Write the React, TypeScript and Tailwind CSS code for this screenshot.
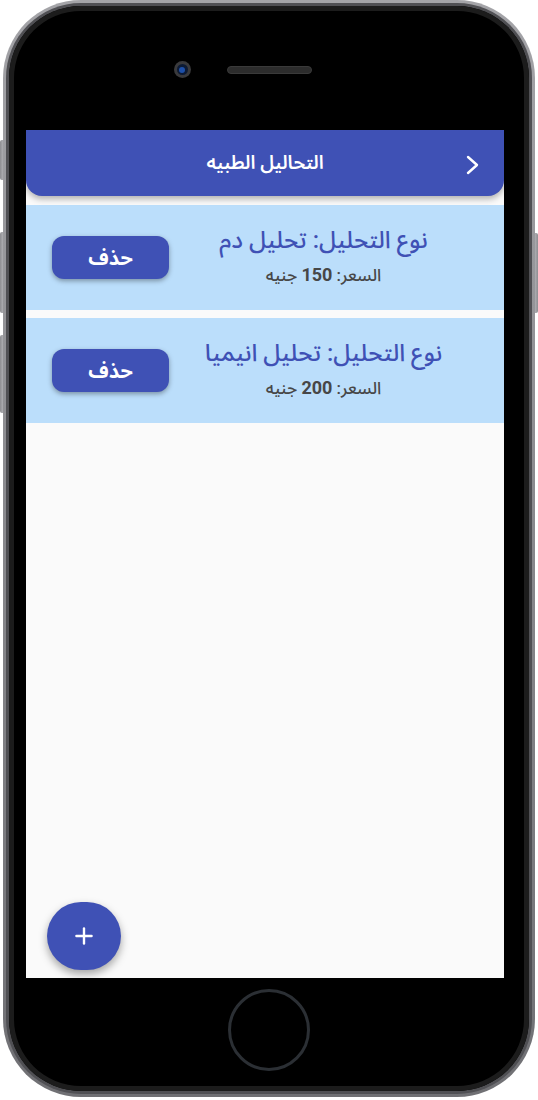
import { Plus } from "lucide-react";

const tests = [
  { name: "تحليل دم", price: 150 },
  { name: "تحليل انيميا", price: 200 },
];

const TestCard = ({ name, price }: { name: string; price: number }) => {
  return (
    <div className="flex h-[105px] items-center bg-[#bbdefb] px-[26px]">
      <div className="flex flex-1 flex-col items-center">
        <p className="text-[24px] leading-[23px] font-medium text-[#3f51b5]">نوع التحليل: {name}</p>
        <p className="mt-[12px] text-[17px] leading-[22px] font-medium text-[#474747]">
          السعر: <span className="text-[18px] font-bold">{price}</span> جنيه
        </p>
      </div>
      <button className="h-[43px] w-[117px] rounded-[12px] bg-[#3f51b5] text-[20px] font-bold text-white shadow-[0_2px_5px_rgba(0,0,0,0.35)]">
        حذف
      </button>
    </div>
  );
};

const Screen = () => {
  return (
    <div
      dir="rtl"
      className="relative ml-[17px] flex h-[848px] w-[478px] flex-col bg-[#fafafa] font-['Roboto','Noto_Sans_Arabic','DejaVu_Sans',sans-serif]"
    >
      <header className="relative z-10 flex h-[66px] shrink-0 items-center justify-center rounded-b-[16px] bg-[#3f51b5] shadow-[0_3px_6px_rgba(0,0,0,0.3)]">
        <svg className="absolute right-[23px] top-[25px]" width="16" height="20" viewBox="0 0 16 20" fill="none">
          <polyline points="3,2 12,10 3,18" stroke="white" strokeWidth="2.4" strokeLinecap="round" strokeLinejoin="round" />
        </svg>
        <h1 className="text-[19px] font-semibold text-white">التحاليل الطبيه</h1>
      </header>
      <div className="mt-[9px] flex flex-col gap-[8px]">
        {tests.map((t) => (
          <TestCard key={t.name} name={t.name} price={t.price} />
        ))}
      </div>
      <button className="absolute bottom-[8px] left-[21px] flex h-[68px] w-[74px] items-center justify-center rounded-full bg-[#3f51b5] text-white shadow-[0_4px_8px_rgba(0,0,0,0.35)]">
        <Plus size={26} strokeWidth={2.2} />
      </button>
    </div>
  );
};

export default function App() {
  return (
    <div className="relative h-[1100px] w-[538px] overflow-hidden bg-white">
      {/* side buttons */}
      <div className="absolute left-0 top-[140px] h-[40px] w-[5px] rounded-l-[2px] bg-gradient-to-r from-[#8d8d91] to-[#c4c4c8]" />
      <div className="absolute left-0 top-[232px] h-[81px] w-[5px] rounded-l-[2px] bg-gradient-to-r from-[#8d8d91] to-[#c4c4c8]" />
      <div className="absolute left-0 top-[335px] h-[78px] w-[5px] rounded-l-[2px] bg-gradient-to-r from-[#8d8d91] to-[#c4c4c8]" />
      <div className="absolute right-0 top-[233px] h-[80px] w-[5px] rounded-r-[2px] bg-gradient-to-l from-[#8d8d91] to-[#c4c4c8]" />

      {/* phone body */}
      <div className="relative ml-[3px] h-[1097px] w-[532px] rounded-[78px] bg-gradient-to-b from-[#a4a4a8] via-[#88888c] to-[#707074] p-[3px]">
        <div className="h-full w-full rounded-[75px] bg-[#505054] p-[3px]">
          <div className="flex h-full w-full flex-col items-start rounded-[72px] bg-black shadow-[inset_0_0_0_5px_#1c1c1c]">
            <div className="flex h-[124px] w-full items-start justify-center pt-[55px]">
              <div className="flex items-center gap-[36px]">
                <div className="flex h-[17px] w-[17px] items-center justify-center rounded-full bg-[#3a3a3c]">
                  <div className="flex h-[11px] w-[11px] items-center justify-center rounded-full bg-[#0d1a33]">
                    <div className="h-[6px] w-[6px] rounded-full bg-[#1d4fa8]" />
                  </div>
                </div>
                <div className="h-[8px] w-[85px] rounded-full border border-[#3a3a3a] bg-[#2c2c2c]" />
                <div className="h-[17px] w-[17px]" />
              </div>
            </div>
            <Screen />
            <div className="flex w-full flex-1 items-start justify-center pt-[11px]">
              <div className="h-[82px] w-[82px] rounded-full border-[3px] border-[#2b2f34] bg-black" />
            </div>
          </div>
        </div>
      </div>
    </div>
  );
}
